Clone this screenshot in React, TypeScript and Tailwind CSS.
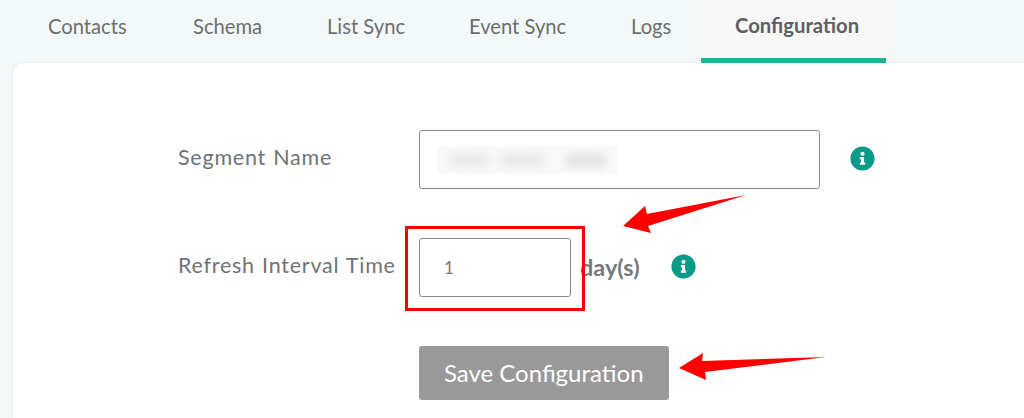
import { FaInfoCircle } from "react-icons/fa";

const tabs = [
  { t: "Contacts", w: "w-[145px]" },
  { t: "Schema", w: "w-[134px]" },
  { t: "List Sync", w: "w-[142px]" },
  { t: "Event Sync", w: "w-[162px]" },
  { t: "Logs", w: "w-[103px]" },
];

function Info() {
  return <FaInfoCircle className="block text-[25px] text-[#0a9a87]" />;
}

const label = "w-[241px] text-[21.5px] tracking-[0.75px] [word-spacing:1px] text-[#6f7375]";

export default function App() {
  return (
    <div className="relative h-[418px] w-[1024px] overflow-hidden bg-[#f3f9f8] font-['Lato',sans-serif]">
      <div className="flex h-[63px] pl-[15px]">
        {tabs.map(({ t, w }) => (
          <div key={t} className={`${w} flex h-full items-center pb-[11px] pl-[33px] text-[20.2px] text-[#6b6f70]`}>
            {t}
          </div>
        ))}
        <div className="flex h-full w-[189px] flex-col bg-[#f7f7f7]">
          <div className="flex flex-1 items-center pb-[8px] pl-[34px] text-[20.3px] font-bold text-[#5c6062]">
            Configuration
          </div>
          <div className="h-[5px] w-[185px] bg-[#20b493]" />
        </div>
      </div>
      <div className="ml-[13px] h-[355px] rounded-tl-[10px] bg-white pl-[165px] pt-[67px] shadow-[0_0_3px_rgba(0,0,0,0.1)]">
        <div className="flex h-[59px] items-center">
          <div className={`${label} pb-[4px]`}>Segment Name</div>
          <div className="relative h-[59px] w-[400.5px] rounded-[3px] border border-[#8a8a8a] bg-white">
            <div className="absolute left-[17px] top-[16px] h-[26px] w-[180px] bg-[#f8f8f8] blur-[1px]" />
            <div className="absolute left-[30px] top-[23px] h-[12px] w-[40px] rounded-full bg-[#e8e8e8] blur-[4px]" />
            <div className="absolute left-[80px] top-[23px] h-[12px] w-[45px] rounded-full bg-[#e8e8e8] blur-[4px]" />
            <div className="absolute left-[145px] top-[23px] h-[13px] w-[42px] rounded-full bg-[#e2e2e2] blur-[4px]" />
          </div>
          <div className="ml-[30.5px] pb-[2px]">
            <Info />
          </div>
        </div>
        <div className="mt-[49px] flex h-[59px] items-center">
          <div className={`${label} pb-[5px]`}>Refresh Interval Time</div>
          <input
            readOnly
            value="1"
            className="h-[59px] w-[152px] rounded-[3px] border border-[#8a8a8a] bg-white pl-[24px] text-[17px] text-[#777777] outline-none"
          />
          <div className="ml-[9px] w-[91px] text-[23.5px] font-bold text-[#777a7c]">day(s)</div>
          <div className="pb-[2px]">
            <Info />
          </div>
        </div>
        <div className="ml-[240.5px] mt-[49px] flex h-[54px] w-[250.5px] items-center justify-center rounded-[3px] bg-[#999999] text-[24px] text-white">
          Save Configuration
        </div>
      </div>
      <div className="absolute left-[405px] top-[226px] h-[85px] w-[180px] border-[3px] border-[#ff0000]" />
      <svg className="pointer-events-none absolute left-0 top-0" width="1024" height="418">
        <polygon points="623,226 645,206 647,214 746,195 648,226 651,233" fill="#ff0000" />
        <polygon points="679,368 703,353 702,361 826,357 705,372 706,380" fill="#ff0000" />
      </svg>
    </div>
  );
}
